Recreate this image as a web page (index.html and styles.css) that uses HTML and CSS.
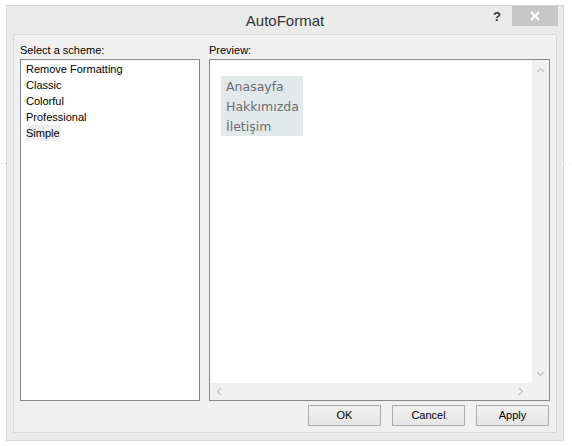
FILE: index.html
```html
<!DOCTYPE html>
<html>
<head>
<meta charset="utf-8">
<link rel="stylesheet" href="styles.css">
</head>
<body>
<div class="dots dots-left"><i></i><i></i></div>
<div class="dots dots-right"><i></i><i></i></div>
<div class="window">
  <div class="titlebar">
    <div class="title">AutoFormat</div>
    <div class="help">?</div>
    <div class="close">
      <svg width="12" height="10" viewBox="0 0 12 10"><path d="M2 1 L10 9 M10 1 L2 9" stroke="#fff" stroke-width="2"/></svg>
    </div>
  </div>
  <div class="client">
    <div class="panes">
      <div class="pane pane-left">
        <div class="label">Select a scheme:</div>
        <ul class="list">
          <li>Remove Formatting</li>
          <li>Classic</li>
          <li>Colorful</li>
          <li>Professional</li>
          <li class="selected">Simple</li>
        </ul>
      </div>
      <div class="pane pane-right">
        <div class="label">Preview:</div>
        <div class="preview">
          <div class="preview-body">
            <div class="preview-area">
              <div class="menu">
                <div>Anasayfa</div>
                <div>Hakkımızda</div>
                <div>İletişim</div>
              </div>
            </div>
            <div class="vscroll">
              <svg width="9" height="6" viewBox="0 0 9 6"><path d="M1 5 L4.5 1.5 L8 5" stroke="#c2c2c2" stroke-width="1.3" fill="none"/></svg>
              <svg width="9" height="6" viewBox="0 0 9 6"><path d="M1 1 L4.5 4.5 L8 1" stroke="#c2c2c2" stroke-width="1.3" fill="none"/></svg>
            </div>
          </div>
          <div class="hscroll">
            <svg width="6" height="9" viewBox="0 0 6 9"><path d="M5 1 L1.5 4.5 L5 8" stroke="#c2c2c2" stroke-width="1.3" fill="none"/></svg>
            <svg width="6" height="9" viewBox="0 0 6 9"><path d="M1 1 L4.5 4.5 L1 8" stroke="#c2c2c2" stroke-width="1.3" fill="none"/></svg>
          </div>
        </div>
      </div>
    </div>
    <div class="buttons">
      <button class="btn">OK</button>
      <button class="btn">Cancel</button>
      <button class="btn">Apply</button>
    </div>
  </div>
</div>
</body>
</html>
```
FILE: styles.css
```css
html, body {
  margin: 0;
  padding: 0;
  background: #ffffff;
}
body {
  width: 572px;
  height: 446px;
  position: relative;
  overflow: hidden;
  font-family: "Segoe UI", "Liberation Sans", Arial, sans-serif;
}
.dots {
  position: absolute;
  top: 163px;
  display: flex;
  gap: 3px;
}
.dots i {
  display: block;
  width: 1px;
  height: 1px;
  background: #c8c8c8;
}
.dots-left { left: 1px; }
.dots-right { left: 565px; }
.window {
  position: absolute;
  left: 6px;
  top: 5px;
  width: 558px;
  height: 436px;
  box-sizing: border-box;
  border: 1px solid #d6d6d6;
  background: #ebebeb;
  display: flex;
  flex-direction: column;
}
.titlebar {
  height: 28px;
  position: relative;
  display: flex;
  align-items: center;
  justify-content: center;
}
.title {
  font-size: 15px;
  color: #333333;
  margin-top: 1px;
}
.help {
  position: absolute;
  left: 486px;
  top: 3px;
  font-family: "Liberation Sans", Arial, sans-serif;
  font-weight: bold;
  font-size: 13px;
  color: #333;
}
.close {
  position: absolute;
  left: 505px;
  top: 0;
  width: 46px;
  height: 20px;
  background: #c7c7c7;
  display: flex;
  align-items: center;
  justify-content: center;
}
.client {
  margin: 0 6px 7px 6px;
  flex: 1;
  border: 1px solid #d9d9d9;
  background: #f0f0f0;
  padding: 8px 5px 0 6px;
  display: flex;
  flex-direction: column;
  font-family: "Liberation Sans", Arial, sans-serif;
  font-size: 11px;
  color: #000;
}
.panes {
  display: flex;
  gap: 9px;
}
.label {
  height: 16px;
  line-height: 14px;
}
.pane-left { width: 180px; }
.pane-right { width: 341px; }
.list {
  margin: 0;
  padding: 1px 0 0 5px;
  list-style: none;
  height: 342px;
  box-sizing: border-box;
  border: 1px solid #828790;
  background: #fff;
}
.list li {
  height: 16px;
  line-height: 16px;
}
.list li.selected {
  display: inline-block;
  background: #eeeeee;
  padding-right: 1px;
}
.preview {
  height: 342px;
  box-sizing: border-box;
  border: 1px solid #828790;
  background: #fff;
  display: flex;
  flex-direction: column;
}
.preview-body {
  flex: 1;
  display: flex;
}
.preview-area {
  flex: 1;
  padding: 16px 0 0 11px;
}
.menu {
  display: inline-block;
  background: #e1e9ea;
  padding: 1px 4px 0 5px;
  height: 60px;
  box-sizing: border-box;
  font-family: "DejaVu Sans", Verdana, sans-serif;
  font-size: 12.5px;
  color: #6e6e6e;
  line-height: 20px;
}
.vscroll {
  width: 17px;
  background: #f0f0f0;
  display: flex;
  flex-direction: column;
  justify-content: space-between;
  align-items: center;
  padding: 7px 0 6px;
}
.hscroll {
  height: 17px;
  background: #f0f0f0;
  display: flex;
  align-items: center;
  padding-left: 6px;
}
.hscroll svg:nth-child(2) {
  margin-left: auto;
  margin-right: 25px;
}
.buttons {
  display: flex;
  justify-content: flex-end;
  gap: 11px;
  margin-top: 4px;
  padding-right: 2px;
}
.btn {
  width: 73px;
  height: 21px;
  box-sizing: border-box;
  border: 1px solid #acacac;
  background: linear-gradient(#f0f0f0, #e5e5e5);
  font-family: "Liberation Sans", Arial, sans-serif;
  font-size: 11px;
  color: #000;
  padding: 0 0 1px;
}
```
